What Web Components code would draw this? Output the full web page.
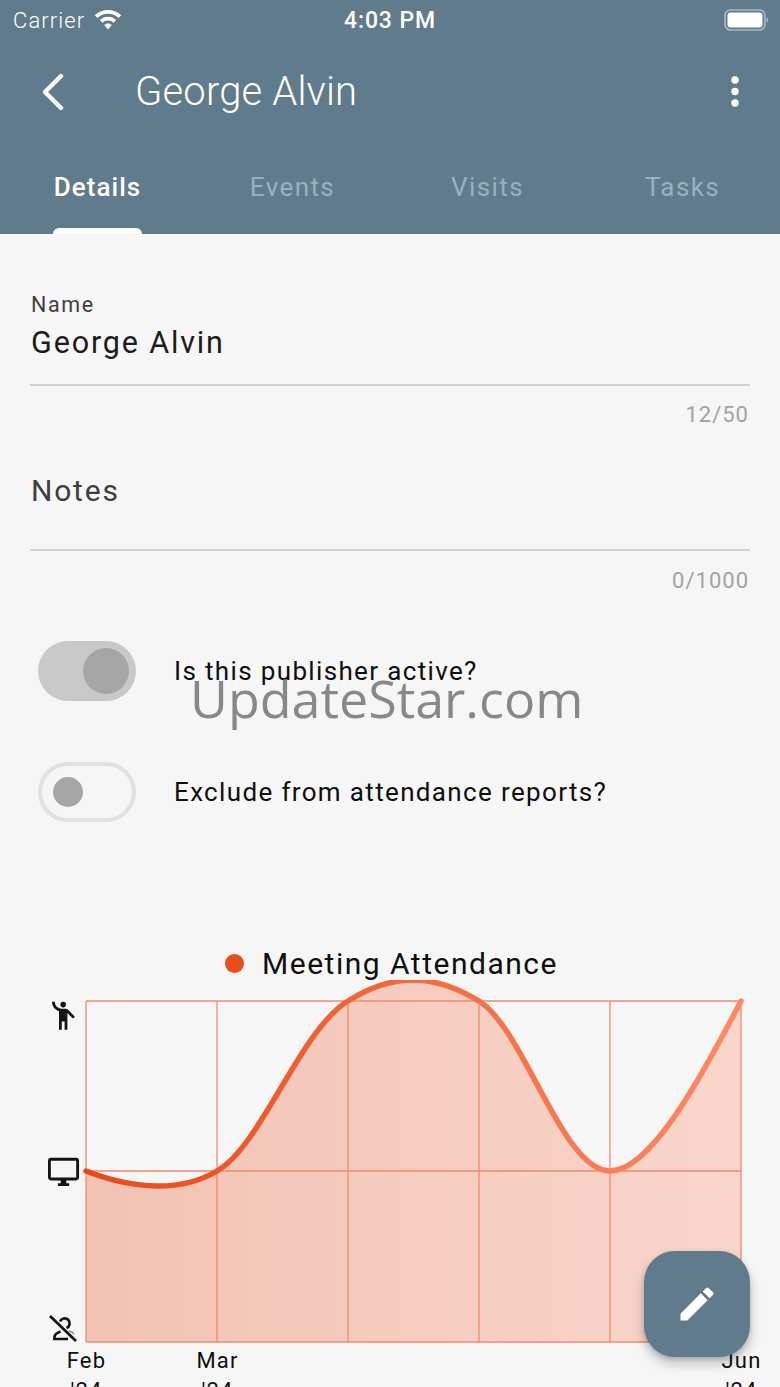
<!DOCTYPE html>
<html>
<head>
<meta charset="utf-8">
<title>George Alvin</title>
<style>
html,body{margin:0;padding:0;background:#f6f6f6;}
body{width:780px;height:1387px;overflow:hidden;position:relative;font-family:Roboto,"Liberation Sans",sans-serif;}
</style>
</head>
<body>
<app-header title-text="George Alvin"></app-header>
<main-form>
    <text-field label="Name" value="George Alvin" counter="12/50"></text-field>
    <text-field label="Notes" counter="0/1000"></text-field>
    <toggle-row checked>Is this publisher active?</toggle-row>
    <toggle-row>Exclude from attendance reports?</toggle-row>
    <attendance-chart></attendance-chart>
</main-form>
<edit-fab></edit-fab>
<water-mark>UpdateStar.com</water-mark>

<script>
class AppHeader extends HTMLElement{
    constructor(){
        super();
        this.attachShadow({mode:'open'});
    }
    connectedCallback(){
        const title=this.getAttribute('title-text');
        this.shadowRoot.innerHTML=`
        <style>
            :host{display:block;height:234px;background:#5f7b8c;color:#fff;font-family:Roboto,sans-serif;}
            .status{height:40px;display:grid;grid-template-columns:1fr auto 1fr;align-items:center;padding:0 13px;font-size:22px;}
            .left{display:flex;align-items:center;gap:9px;font-weight:300;letter-spacing:1.1px;}
            .time{font-weight:500;font-size:23px;letter-spacing:.9px;}
            .right{display:flex;justify-content:flex-end;}
            .bar{height:104px;display:flex;align-items:center;padding:0 41px 0 41px;}
            .bar h1{flex:1;margin:0 0 0 70px;font-size:40px;font-weight:300;letter-spacing:.15px;line-height:44px;}
            .tabs{display:grid;grid-template-columns:repeat(4,1fr);height:90px;}
            .tab{position:relative;display:flex;justify-content:center;padding-top:28px;font-size:26px;font-weight:400;letter-spacing:1.4px;line-height:30px;color:#9ab1bd;}
            .tab.on{color:#fff;font-weight:500;letter-spacing:1.05px;}
            .tab.on::after{content:"";position:absolute;left:53px;bottom:0;width:89px;height:6px;background:#fff;border-radius:6px 6px 0 0;}
        </style>
        <div class="status">
            <div class="left">Carrier
                <svg width="28" height="20" viewBox="0 0 28 20"><path fill="#fff" d="M14 0C8.8 0 4.2 2 .8 5.2l2.6 2.7C6.2 5.3 9.9 3.7 14 3.7s7.8 1.6 10.6 4.2l2.6-2.7C23.8 2 19.2 0 14 0zM14 6.8c-3.2 0-6.1 1.2-8.2 3.3l2.6 2.6c1.5-1.4 3.4-2.2 5.6-2.2s4.1.8 5.6 2.2l2.6-2.6c-2.1-2.1-5-3.3-8.2-3.3zM14 13.5c-1.5 0-2.8.6-3.8 1.5L14 19.5l3.8-4.5c-1-.9-2.3-1.5-3.8-1.5z"/></svg>
            </div>
            <div class="time">4:03 PM</div>
            <div class="right">
                <svg width="44" height="22" viewBox="0 0 44 22" style="margin-right:-1px"><rect x="1" y="1" width="40" height="20" rx="5.5" fill="none" stroke="#a9bac4" stroke-width="1.6"/><rect x="3.5" y="3.5" width="35" height="15" rx="3" fill="#fff"/><path d="M42.6 8v6c1-.3 1.4-1.6 1.4-3s-.4-2.700-1.400-3z" fill="#a9bac4"/></svg>
            </div>
        </div>
        <div class="bar">
            <svg width="24" height="38" viewBox="0 0 24 38"><path d="M20 3 4 19l16 16" fill="none" stroke="#fff" stroke-width="4.4" stroke-linecap="round" stroke-linejoin="round"/></svg>
            <h1>${title}</h1>
            <svg width="8" height="32" viewBox="0 0 8 32"><circle cx="4" cy="4" r="3.700" fill="#fff"/><circle cx="4" cy="15.500" r="3.700" fill="#fff"/><circle cx="4" cy="27" r="3.700" fill="#fff"/></svg>
        </div>
        <div class="tabs">
            <div class="tab on">Details</div>
            <div class="tab">Events</div>
            <div class="tab">Visits</div>
            <div class="tab">Tasks</div>
        </div>`;
    }
}
customElements.define('app-header',AppHeader);

class MainForm extends HTMLElement{
    constructor(){
        super();
        this.attachShadow({mode:'open'});
        this.shadowRoot.innerHTML=`
        <style>
            :host{display:flex;flex-direction:column;padding:58px 30px 0;}
        </style>
        <slot></slot>`;
    }
}
customElements.define('main-form',MainForm);

class TextField extends HTMLElement{
    constructor(){
        super();
        this.attachShadow({mode:'open'});
    }
    connectedCallback(){
        const label=this.getAttribute('label');
        const value=this.getAttribute('value');
        const counter=this.getAttribute('counter');
        this.shadowRoot.innerHTML=`
        <style>
            :host{display:block;font-family:Roboto,sans-serif;}
            .box{height:92px;border-bottom:2px solid #ccd4d4;padding-left:1px;}
            .label{font-size:21.500px;letter-spacing:1.600px;line-height:26px;color:#3f3f3f;}
            .value{font-size:30.500px;letter-spacing:1.850px;line-height:48px;color:#1c1c1c;margin-top:1px;}
            .big{font-size:30px;letter-spacing:1.800px;line-height:36px;color:#3c3f40;padding-top:25px;}
            .count{text-align:right;font-size:22px;letter-spacing:1px;line-height:26px;color:#a2a2a2;padding:16px 1px 0 0;height:46px;}
            :host(:not([value])) .box{height:101px;}
            :host(:not([value])) .count{padding-top:17px;height:73px;}
        </style>
        <div class="box">
            ${value?`<div class="label">${label}</div><div class="value">${value}</div>`:`<div class="big">${label}</div>`}
        </div>
        <div class="count">${counter}</div>`;
    }
}
customElements.define('text-field',TextField);

class ToggleRow extends HTMLElement{
    constructor(){
        super();
        this.attachShadow({mode:'open'});
    }
    connectedCallback(){
        this.shadowRoot.innerHTML=`
        <style>
            :host{display:flex;align-items:center;gap:38px;padding:0 0 0 8px;height:60px;margin-bottom:61px;font-family:Roboto,sans-serif;font-size:26px;letter-spacing:1.35px;color:#0f0f0f;}
            .track{box-sizing:border-box;width:98px;height:60px;border-radius:30px;display:flex;align-items:center;}
            .thumb{border-radius:50%;background:#a6a6a6;}
            :host([checked]) .track{background:#c9c9c9;justify-content:flex-end;padding-right:7px;}
            :host([checked]) .thumb{width:46px;height:46px;}
            :host(:not([checked])) .track{border:4px solid #e1e1e1;padding-left:11px;}
            :host(:not([checked])) .thumb{width:30px;height:30px;}
        </style>
        <div class="track"><div class="thumb"></div></div>
        <div class="text"><slot></slot></div>`;
    }
}
customElements.define('toggle-row',ToggleRow);

class AttendanceChart extends HTMLElement{
    constructor(){
        super();
        this.attachShadow({mode:'open'});
    }
    connectedCallback(){
        // svg uses page coordinates, plot box is 86..741 x 1001..1342
        const xs=[86,217,348,479,610,741];
        const ys=[1001,1171,1342];
        const curve='M86 1171C135 1190 182 1192 217 1171C262 1145 300 1030 348 1001C370 987 390 980 413 980C436 980 456 987 479 1001C525 1030 562 1171 610 1171C650 1171 700 1080 741 1001';
        const labels=[['Feb',"'24"],['Mar',"'24"],['',''],['',''],['',''],['Jun',"'24"]];
        this.shadowRoot.innerHTML=`
        <style>
            :host{display:block;margin:0 -30px;padding-top:61px;font-family:Roboto,sans-serif;color:#0f0f0f;}
            .legend{display:flex;justify-content:center;align-items:center;gap:18px;height:38px;font-size:30px;letter-spacing:1.5px;padding-left:3px;}
            .dot{width:19px;height:19px;border-radius:50%;background:#e84e1b;}
            svg{display:block;margin-top:-2px;}
            .ticks{display:grid;grid-template-columns:repeat(6,131px);margin-left:21px;font-size:22px;letter-spacing:1.200px;line-height:30px;text-align:center;padding-top:2px;}
            .ticks div{white-space:pre-line;}
        </style>
        <div class="legend"><div class="dot"></div><div>Meeting Attendance</div></div>
        <svg width="780" height="364" viewBox="0 980 780 364">
            <defs>
                <linearGradient id="l" gradientUnits="userSpaceOnUse" x1="86" x2="741" y1="0" y2="0">
                    <stop offset="0" stop-color="#e84a17"/><stop offset="1" stop-color="#ff8a65"/>
                </linearGradient>
                <linearGradient id="f" gradientUnits="userSpaceOnUse" x1="86" x2="741" y1="0" y2="0">
                    <stop offset="0" stop-color="#e84a17" stop-opacity=".3"/><stop offset="1" stop-color="#ff8a65" stop-opacity=".3"/>
                </linearGradient>
            </defs>
            <path d="${curve}L741 1342L86 1342Z" fill="url(#f)"/>
            <g stroke="#f08a6e" stroke-width="1.300" fill="none">
                ${xs.map(x=>`<line x1="${x}" x2="${x}" y1="1001" y2="1342"/>`).join('')}
                ${ys.map(y=>`<line x1="86" x2="741" y1="${y}" y2="${y}"/>`).join('')}
            </g>
            <path d="${curve}" fill="none" stroke="url(#l)" stroke-width="5.500" stroke-linecap="round"/>
            <g fill="#141414">
                <g transform="translate(46.400 999) scale(1.400)"><circle cx="12" cy="4" r="2"/><path d="M15.890 8.110C15.500 7.720 14.830 7 13.530 7h-2.540C8.240 6.990 6 4.750 6 2H4c0 3.160 2.110 5.840 5 6.710V22h2v-6h2v6h2V10.050L18.950 14l1.410-1.410-4.470-4.480z"/></g>
                <path transform="translate(46.600 1155) scale(1.410)" d="M21 2H3c-1.100 0-2 .9-2 2v12c0 1.100.9 2 2 2h7v2H8v2h8v-2h-2v-2h7c1.100 0 2-.9 2-2V4c0-1.100-.9-2-2-2zm0 14H3V4h18v12z"/>
            </g>
            <g fill="none" stroke="#141414" stroke-width="2.700">
                <path d="M50 1316 76 1341"/>
                <path d="M54.500 1339v-2c0-2 2-4 6-5.500M53 1339h15"/>
                <path d="M60 1321.500a5 5 0 1 1 6.500 6.500"/>
                <path d="M69 1331c2 .5 4 1.500 5 3" stroke="#8a8a8a" stroke-width="1.500"/>
            </g>
        </svg>
        <div class="ticks">${labels.map(l=>`<div>${l[0]}${l[0]?'\n'+l[1]:''}</div>`).join('')}</div>`;
    }
}
customElements.define('attendance-chart',AttendanceChart);

class EditFab extends HTMLElement{
    constructor(){
        super();
        this.attachShadow({mode:'open'});
        this.shadowRoot.innerHTML=`
        <style>
            :host{position:absolute;left:644px;top:1251px;width:106px;height:106px;border-radius:31px;background:#5f7b8c;display:flex;align-items:center;justify-content:center;box-shadow:0 7px 12px rgba(0,0,0,.22),0 2px 5px rgba(0,0,0,.14);}
        </style>
        <svg width="44" height="44" viewBox="0 0 24 24"><path fill="#fff" d="M3 17.250V21h3.750L17.810 9.940l-3.750-3.750L3 17.250zM20.710 7.040c.39-.39.39-1.020 0-1.410l-2.340-2.340c-.39-.39-1.020-.39-1.410 0l-1.830 1.830 3.750 3.750 1.830-1.830z"/></svg>`;
    }
}
customElements.define('edit-fab',EditFab);

class WaterMark extends HTMLElement{
    constructor(){
        super();
        this.attachShadow({mode:'open'});
        this.shadowRoot.innerHTML=`
        <style>
            :host{position:absolute;left:190px;top:662px;font-family:"Open Sans",Roboto,sans-serif;font-weight:400;font-size:52px;line-height:72px;color:rgba(90,90,90,.7);white-space:nowrap;}
        </style>
        <slot></slot>`;
    }
}
customElements.define('water-mark',WaterMark);
</script>
</body>
</html>
